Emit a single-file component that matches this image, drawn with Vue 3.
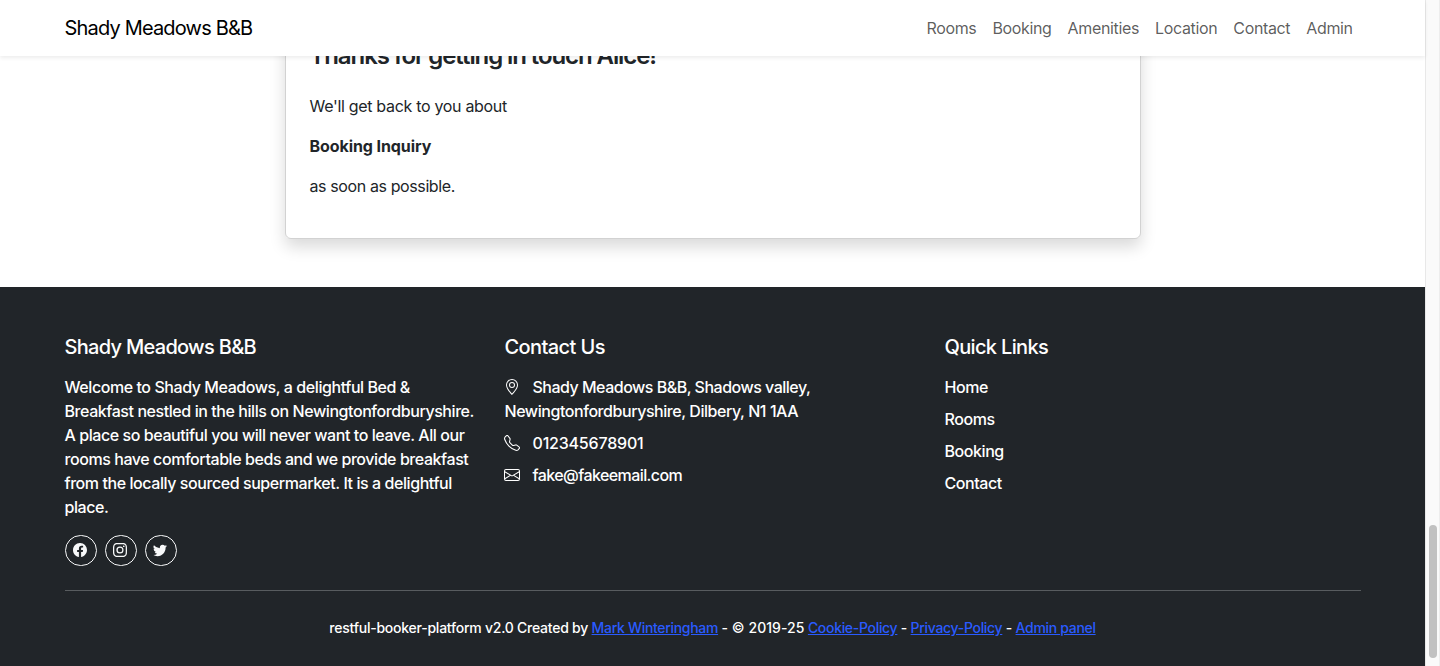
<script setup>
const navLinks = ['Rooms', 'Booking', 'Amenities', 'Location', 'Contact', 'Admin']
const quickLinks = ['Home', 'Rooms', 'Booking', 'Contact']
const about = [
  'Welcome to Shady Meadows, a delightful Bed &',
  'Breakfast nestled in the hills on Newingtonfordburyshire.',
  'A place so beautiful you will never want to leave. All our',
  'rooms have comfortable beds and we provide breakfast',
  'from the locally sourced supermarket. It is a delightful',
  'place.',
]
const social = [
  { name: 'Facebook', d: 'M16 8.049c0-4.446-3.582-8.05-8-8.05C3.58 0-.002 3.603-.002 8.05c0 4.017 2.926 7.347 6.75 7.951v-5.625h-2.03V8.05H6.75V6.275c0-2.017 1.195-3.131 3.022-3.131.876 0 1.791.157 1.791.157v1.98h-1.009c-.993 0-1.303.621-1.303 1.258v1.51h2.218l-.354 2.326H9.25V16c3.824-.604 6.75-3.934 6.75-7.951' },
  { name: 'Instagram', d: 'M8 0C5.829 0 5.556.01 4.703.048 3.85.088 3.269.222 2.76.42a3.9 3.9 0 0 0-1.417.923A3.9 3.9 0 0 0 .42 2.76C.222 3.268.087 3.85.048 4.7.01 5.555 0 5.827 0 8.001c0 2.172.01 2.444.048 3.297.04.852.174 1.433.372 1.942.205.526.478.972.923 1.417.444.445.89.719 1.416.923.51.198 1.09.333 1.942.372C5.555 15.99 5.827 16 8 16s2.444-.01 3.298-.048c.851-.04 1.434-.174 1.943-.372a3.9 3.9 0 0 0 1.416-.923c.445-.445.718-.891.923-1.417.197-.509.332-1.09.372-1.942C15.99 10.445 16 10.173 16 8s-.01-2.445-.048-3.299c-.04-.851-.175-1.433-.372-1.941a3.9 3.9 0 0 0-.923-1.417A3.9 3.9 0 0 0 13.24.42c-.51-.198-1.092-.333-1.943-.372C10.443.01 10.172 0 7.998 0zm-.717 1.442h.718c2.136 0 2.389.007 3.232.046.78.035 1.204.166 1.486.275.373.145.64.319.92.599s.453.546.598.92c.11.281.24.705.275 1.485.039.843.047 1.096.047 3.231s-.008 2.389-.047 3.232c-.035.78-.166 1.203-.275 1.485a2.5 2.5 0 0 1-.599.919c-.28.28-.546.453-.92.598-.28.11-.704.24-1.485.276-.843.038-1.096.047-3.232.047s-2.39-.009-3.233-.047c-.78-.036-1.203-.166-1.485-.276a2.5 2.5 0 0 1-.92-.598 2.5 2.5 0 0 1-.6-.92c-.109-.281-.24-.705-.275-1.485-.038-.843-.046-1.096-.046-3.233s.008-2.388.046-3.231c.036-.78.166-1.204.276-1.486.145-.373.319-.64.599-.92s.546-.453.92-.598c.282-.11.705-.24 1.485-.276.738-.034 1.024-.044 2.515-.045zm4.988 1.328a.96.96 0 1 0 0 1.92.96.96 0 0 0 0-1.92m-4.27 1.122a4.109 4.109 0 1 0 0 8.217 4.109 4.109 0 0 0 0-8.217m0 1.441a2.667 2.667 0 1 1 0 5.334 2.667 2.667 0 0 1 0-5.334' },
  { name: 'Twitter', d: 'M5.026 15c6.038 0 9.341-5.003 9.341-9.334q.002-.211-.006-.422A6.7 6.7 0 0 0 16 3.542a6.7 6.7 0 0 1-1.889.518 3.3 3.3 0 0 0 1.447-1.817 6.5 6.5 0 0 1-2.087.793A3.286 3.286 0 0 0 7.875 6.03a9.32 9.32 0 0 1-6.767-3.429 3.29 3.29 0 0 0 1.018 4.382A3.3 3.3 0 0 1 .64 6.575v.045a3.29 3.29 0 0 0 2.632 3.218 3.2 3.2 0 0 1-.865.115 3 3 0 0 1-.614-.057 3.28 3.28 0 0 0 3.067 2.277A6.6 6.6 0 0 1 .78 13.58a6 6 0 0 1-.78-.045A9.34 9.34 0 0 0 5.026 15' },
]
</script>

<template>
  <div class="window">
    <div class="page">
      <nav class="navbar">
        <div class="container bar">
          <a class="brand">Shady Meadows B&amp;B</a>
          <div class="nav-links">
            <a v-for="l in navLinks" :key="l">{{ l }}</a>
          </div>
        </div>
      </nav>

      <main class="contact">
        <div class="card">
          <h3>Thanks for getting in touch Alice!</h3>
          <p class="c1">We'll get back to you about</p>
          <p class="c2">Booking Inquiry</p>
          <p class="c3">as soon as possible.</p>
        </div>
      </main>

      <footer>
        <div class="container">
          <div class="columns">
            <section>
              <h5 class="h-a">Shady Meadows B&amp;B</h5>
              <p class="about"><span v-for="(t, i) in about" :key="i">{{ t }}</span></p>
              <div class="social">
                <a v-for="s in social" :key="s.name" :aria-label="s.name">
                  <svg viewBox="0 0 16 16"><path :d="s.d" /></svg>
                </a>
              </div>
            </section>
            <section>
              <h5 class="h-b">Contact Us</h5>
              <div class="info">
                <svg viewBox="0 0 16 16"><path d="M12.166 8.94c-.524 1.062-1.234 2.12-1.96 3.07A32 32 0 0 1 8 14.58a32 32 0 0 1-2.206-2.57c-.726-.95-1.436-2.008-1.96-3.07C3.304 7.867 3 6.862 3 6a5 5 0 0 1 10 0c0 .862-.305 1.867-.834 2.94M8 16s6-5.686 6-10A6 6 0 0 0 2 6c0 4.314 6 10 6 10" /><path d="M8 8a2 2 0 1 1 0-4 2 2 0 0 1 0 4m0 1a3 3 0 1 0 0-6 3 3 0 0 0 0 6" /></svg>
                <span class="i0">Shady Meadows B&amp;B, Shadows valley,</span><br>
                <span class="i1">Newingtonfordburyshire, Dilbery, N1 1AA</span>
              </div>
              <div class="info">
                <svg viewBox="0 0 16 16"><path d="M3.654 1.328a.678.678 0 0 0-1.015-.063L1.605 2.3c-.483.484-.661 1.169-.45 1.77a17.6 17.6 0 0 0 4.168 6.608 17.6 17.6 0 0 0 6.608 4.168c.601.211 1.286.033 1.77-.45l1.034-1.034a.678.678 0 0 0-.063-1.015l-2.307-1.794a.68.68 0 0 0-.58-.122l-2.19.547a1.75 1.75 0 0 1-1.657-.459L5.482 8.062a1.75 1.75 0 0 1-.46-1.657l.548-2.19a.68.68 0 0 0-.122-.58zM1.884.511a1.745 1.745 0 0 1 2.612.163L6.29 2.98c.329.423.445.974.315 1.494l-.547 2.19a.68.68 0 0 0 .178.643l2.457 2.457a.68.68 0 0 0 .644.178l2.189-.547a1.75 1.75 0 0 1 1.494.315l2.306 1.794c.829.645.905 1.87.163 2.611l-1.034 1.034c-.74.74-1.846 1.065-2.877.702a18.6 18.6 0 0 1-7.01-4.42 18.6 18.6 0 0 1-4.42-7.009c-.362-1.03-.037-2.137.703-2.877z" /></svg>
                <span class="i2">012345678901</span>
              </div>
              <div class="info">
                <svg viewBox="0 0 16 16"><path d="M0 4a2 2 0 0 1 2-2h12a2 2 0 0 1 2 2v8a2 2 0 0 1-2 2H2a2 2 0 0 1-2-2zm2-1a1 1 0 0 0-1 1v.217l7 4.2 7-4.2V4a1 1 0 0 0-1-1zm13 2.383-4.708 2.825L15 11.105zm-.034 6.876-5.64-3.471L8 9.583l-1.326-.795-5.64 3.47A1 1 0 0 0 2 13h12a1 1 0 0 0 .966-.741M1 11.105l4.708-2.897L1 5.383z" /></svg>
                <span class="i3">fake@fakeemail.com</span>
              </div>
            </section>
            <section>
              <h5 class="h-c">Quick Links</h5>
              <div v-for="l in quickLinks" :key="l" class="info"><a>{{ l }}</a></div>
            </section>
          </div>
          <hr>
          <p class="legal">restful-booker-platform v2.0 Created by <a>Mark Winteringham</a> <span class="year">- © 2019-25</span> <a>Cookie-Policy</a> - <a>Privacy-Policy</a> - <a>Admin panel</a></p>
        </div>
      </footer>
    </div>
    <div class="scrollbar"><div class="thumb"></div></div>
  </div>
</template>

<style>
body { overflow: hidden; }
</style>

<style scoped>
* { box-sizing: border-box; margin: 0; }
.window {
  display: flex;
  height: 666px;
  overflow: hidden;
  background: #fff;
  color: #212529;
  font: 400 16px/24px Inter, "Liberation Sans", sans-serif;
  letter-spacing: -0.35px;
  white-space: nowrap;
}
.page { width: 1425px; display: flex; flex-direction: column; }
.container { width: 1320px; margin: 0 auto; padding: 0 12px; }
.navbar {
  position: relative;
  z-index: 1;
  flex: none;
  height: 56px;
  background: #fff;
  box-shadow: 0 2px 4px rgba(0, 0, 0, 0.075);
}
.bar { height: 56px; display: flex; align-items: center; justify-content: space-between; }
.brand { font-size: 20px; line-height: 30px; color: #000; letter-spacing: -0.82px; }
.nav-links { display: flex; gap: 16px; padding-right: 7.8px; color: rgba(0, 0, 0, 0.65); }
.contact { flex: none; height: 231px; display: flex; justify-content: center; padding-bottom: 48px; }
.card {
  width: 856px;
  margin-top: -40px;
  padding: 24px 24px;
  border: 1px solid rgba(0, 0, 0, 0.176);
  border-radius: 6px;
  box-shadow: 0 8px 16px rgba(0, 0, 0, 0.15);
}
.card h3 { font-size: 24px; line-height: 29px; font-weight: 600; letter-spacing: -1.09px; margin-bottom: 24px; }
.card p { margin-bottom: 16px; }
.card .c1 { letter-spacing: -0.31px; }
.card .c2 { font-weight: 700; letter-spacing: -0.08px; }
.card .c3 { letter-spacing: -0.39px; }
footer { flex: 1; padding-top: 48px; background: #212529; color: #fff; font-weight: 450; letter-spacing: -0.43px; }
.columns { display: grid; grid-template-columns: repeat(3, 440px); }
h5 { font-size: 20px; line-height: 24px; font-weight: 550; margin-bottom: 16px; }
.h-a { letter-spacing: -0.7px; }
.h-b { letter-spacing: -0.6px; }
.h-c { letter-spacing: -0.66px; }
.about span { display: block; width: max-content; }
.social { display: flex; gap: 8px; margin: 16px 0 24px; }
.social a {
  width: 32px;
  height: 31px;
  display: grid;
  place-items: center;
  padding: 0 1px 1px 0;
  border: 1px solid #f8f9fa;
  border-radius: 16px;
}
.social svg { width: 14px; height: 14px; fill: #f8f9fa; }
.info { margin-bottom: 8px; }
.info svg { width: 16px; height: 16px; margin: 0 8px 0 -0.5px; fill: #fff; vertical-align: -2px; }
.info svg + span { margin-left: 4.5px; }
.i0 { letter-spacing: -0.5px; }
.i1 { letter-spacing: -0.44px; }
.i2 { letter-spacing: -0.2px; }
.i3 { letter-spacing: -0.58px; }
hr { border: 0; height: 1px; background: #585c5f; margin-bottom: 25px; }
.legal { font-size: 14px; text-align: center; letter-spacing: -0.24px; }
.legal a { color: #2a5bff; text-decoration: underline; letter-spacing: -0.31px; }
.year { letter-spacing: 0.04px; }
.scrollbar {
  width: 15px;
  display: flex;
  flex-direction: column;
  justify-content: flex-end;
  padding: 0 3px 8px;
  background: #fafafa;
  border-left: 1px solid #e8e8e8;
  border-right: 1px solid #ededed;
}
.thumb { width: 8px; height: 133px; border-radius: 4px; background: #c1c1c1; }
</style>
